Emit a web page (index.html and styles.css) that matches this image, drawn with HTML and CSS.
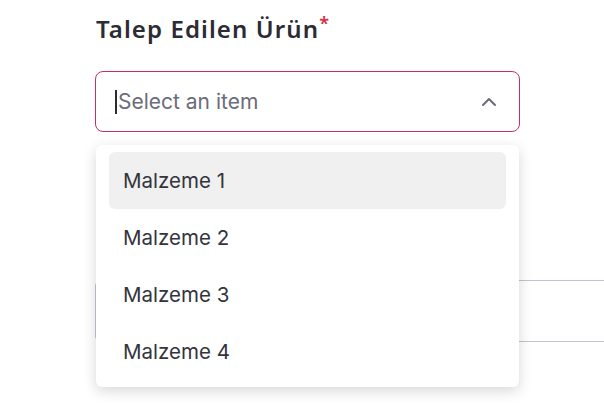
FILE: index.html
```html
<!DOCTYPE html>
<html>
<head>
<meta charset="utf-8">
<link rel="stylesheet" href="styles.css">
</head>
<body>
<div class="page">
  <div class="field">
    <label class="label">Talep Edilen Ürün<span class="req">*</span></label>
    <div class="select">
      <span class="caret"></span>
      <span class="placeholder">Select an item</span>
      <svg class="chev" width="16" height="10" viewBox="0 0 16 10"><path d="M2 8 L8 2 L14 8" fill="none" stroke="#6b6b7b" stroke-width="2" stroke-linecap="round" stroke-linejoin="round"/></svg>
    </div>
  </div>
  <div class="next">
    <div class="next-label">&nbsp;</div>
    <div class="next-input"></div>
  </div>
  <ul class="menu">
    <li class="item active">Malzeme 1</li>
    <li class="item">Malzeme 2</li>
    <li class="item">Malzeme 3</li>
    <li class="item">Malzeme 4</li>
  </ul>
</div>
</body>
</html>
```
FILE: styles.css
```css
html, body { margin: 0; padding: 0; background: #fff; }
body { width: 604px; height: 410px; overflow: hidden; font-family: Inter, "Noto Sans", sans-serif; }
.page { position: relative; padding: 12px 0 0 95px; }
.label { display: block; font-family: "Noto Sans", sans-serif; font-weight: 600; font-size: 24px; color: #2b2b33; line-height: 34px; padding-left: 1px; letter-spacing: 1.1px; }
.req { color: #d6334a; font-size: 18px; vertical-align: top; line-height: 22px; margin-left: 0; }
.select { margin-top: 25px; height: 59px; border: 1.5px solid #c2306a; border-radius: 8px; display: flex; align-items: center; padding: 0 22px 0 19px; box-sizing: content-box; width: 382px; }
.caret { width: 2px; height: 24px; background: #2b2b33; margin-right: 1px; }
.placeholder { flex: 1; font-size: 21px; color: #6b6b7b; }
.chev { display: block; }
.next { margin-top: 84px; }
.next-label { height: 64px; }
.next-input { width: 508px; height: 60px; border: 1px solid #c4c2d4; border-right: none; border-radius: 6px 0 0 6px; }
.menu { position: absolute; left: 96px; top: 145px; width: 397px; margin: 0; padding: 7px 13px; list-style: none; background: #fff; border-radius: 6px; box-shadow: 0 4px 14px rgba(0,0,0,0.16); }
.item { height: 57px; display: flex; align-items: center; padding-left: 14px; font-size: 20.5px; color: #34343c; border-radius: 6px; }
.item.active { background: #f0f0f0; }
```
